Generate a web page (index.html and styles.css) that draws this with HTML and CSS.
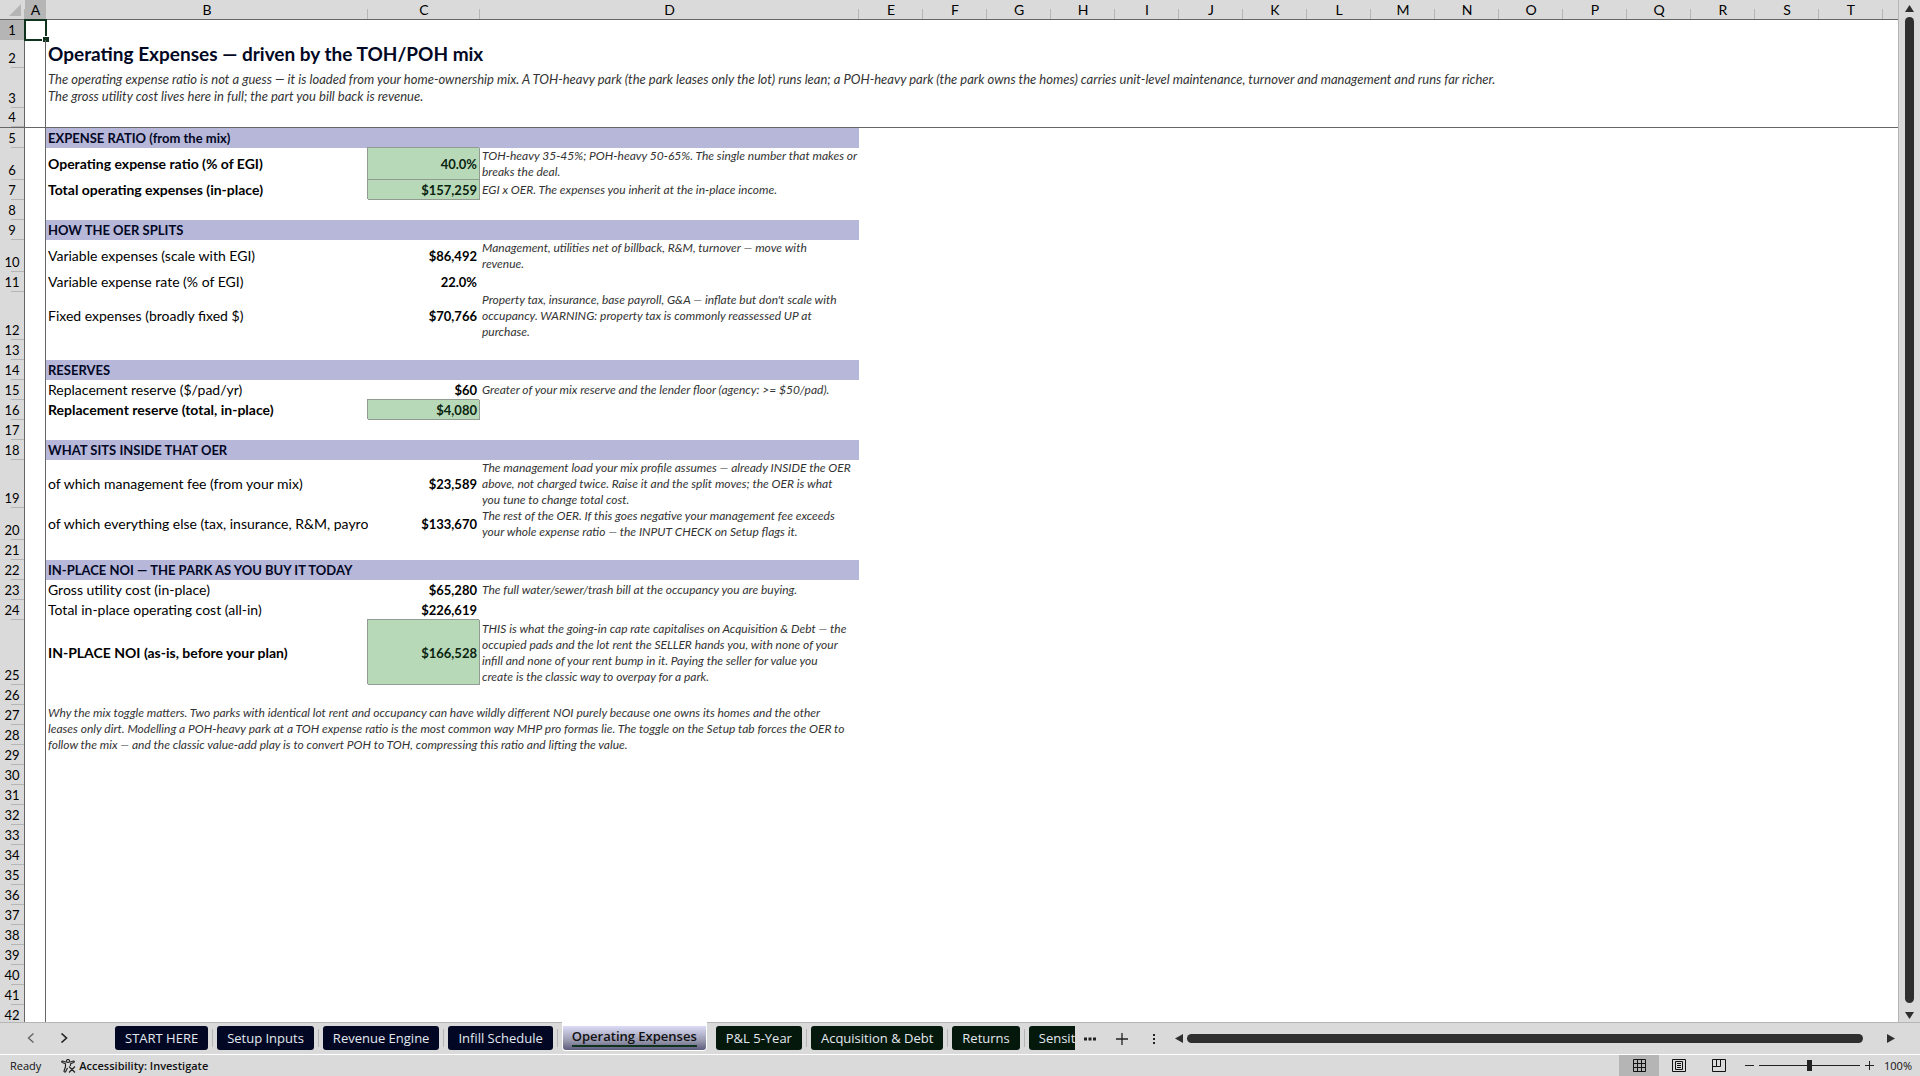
FILE: index.html
```html
<!DOCTYPE html>
<html lang="en">
<head>
  <meta charset="UTF-8">
  <meta name="viewport" content="width=device-width, initial-scale=1.0">
  <title>Operating Expenses</title>
  <link rel="stylesheet" href="styles.css">
</head>
<body>

  <!-- Worksheet -->
  <main class="workspace">
    <div class="sheet">
      <table class="grid">
        <colgroup>
          <col class="col-num"><col class="col-a"><col class="col-b"><col class="col-c"><col class="col-d">
          <col class="col-std" span="16">
          <col>
        </colgroup>
        <thead>
          <tr>
            <th class="corner"><svg width="12" height="12" viewBox="0 0 12 12"><path d="M12 0v12H0z" fill="#b5b5b5"/></svg></th>
            <th class="selected">A</th><th>B</th><th>C</th><th>D</th><th>E</th><th>F</th><th>G</th><th>H</th><th>I</th><th>J</th><th>K</th><th>L</th><th>M</th><th>N</th><th>O</th><th>P</th><th>Q</th><th>R</th><th>S</th><th>T</th><th class="last"></th>
          </tr>
        </thead>
        <tbody>
          <tr><th class="selected">1</th><td class="a"><span class="cursor"></span></td><td colspan="20"></td></tr>
          <tr class="h28"><th>2</th><td class="a"></td><td colspan="20"><h1 class="title">Operating Expenses — driven by the TOH/POH mix</h1></td></tr>
          <tr class="h40"><th>3</th><td class="a"></td><td colspan="20" class="intro">The operating expense ratio is not a guess — it is loaded from your home-ownership mix. A TOH-heavy park (the park leases only the lot) runs lean; a POH-heavy park (the park owns the homes) carries unit-level maintenance, turnover and management and runs far richer.<br>The gross utility cost lives here in full; the part you bill back is revenue.</td></tr>
          <tr class="freeze"><th>4</th><td class="a"></td><td colspan="20"></td></tr>

          <tr><th>5</th><td class="a"></td><td class="band" colspan="3">EXPENSE RATIO (from the mix)</td></tr>
          <tr class="h32 strong"><th>6</th><td class="a"></td><td>Operating expense ratio (% of EGI)</td><td class="num total">40.0%</td><td class="note">TOH-heavy 35-45%; POH-heavy 50-65%. The single number that makes or<br>breaks the deal.</td></tr>
          <tr class="strong"><th>7</th><td class="a"></td><td>Total operating expenses (in-place)</td><td class="num total">$157,259</td><td class="note">EGI x OER. The expenses you inherit at the in-place income.</td></tr>
          <tr><th>8</th><td class="a"></td></tr>

          <tr><th>9</th><td class="a"></td><td class="band" colspan="3">HOW THE OER SPLITS</td></tr>
          <tr class="h32"><th>10</th><td class="a"></td><td>Variable expenses (scale with EGI)</td><td class="num">$86,492</td><td class="note">Management, utilities net of billback, R&amp;M, turnover — move with<br>revenue.</td></tr>
          <tr><th>11</th><td class="a"></td><td>Variable expense rate (% of EGI)</td><td class="num">22.0%</td></tr>
          <tr class="h48"><th>12</th><td class="a"></td><td>Fixed expenses (broadly fixed $)</td><td class="num">$70,766</td><td class="note">Property tax, insurance, base payroll, G&amp;A — inflate but don't scale with<br>occupancy. WARNING: property tax is commonly reassessed UP at<br>purchase.</td></tr>
          <tr><th>13</th><td class="a"></td></tr>

          <tr><th>14</th><td class="a"></td><td class="band" colspan="3">RESERVES</td></tr>
          <tr><th>15</th><td class="a"></td><td>Replacement reserve ($/pad/yr)</td><td class="num">$60</td><td class="note">Greater of your mix reserve and the lender floor (agency: &gt;= $50/pad).</td></tr>
          <tr class="strong"><th>16</th><td class="a"></td><td>Replacement reserve (total, in-place)</td><td class="num total">$4,080</td></tr>
          <tr><th>17</th><td class="a"></td></tr>

          <tr><th>18</th><td class="a"></td><td class="band" colspan="3">WHAT SITS INSIDE THAT OER</td></tr>
          <tr class="h48"><th>19</th><td class="a"></td><td>of which management fee (from your mix)</td><td class="num">$23,589</td><td class="note">The management load your mix profile assumes — already INSIDE the OER<br>above, not charged twice. Raise it and the split moves; the OER is what<br>you tune to change total cost.</td></tr>
          <tr class="h32"><th>20</th><td class="a"></td><td>of which everything else (tax, insurance, R&amp;M, payroll)</td><td class="num">$133,670</td><td class="note">The rest of the OER. If this goes negative your management fee exceeds<br>your whole expense ratio — the INPUT CHECK on Setup flags it.</td></tr>
          <tr><th>21</th><td class="a"></td></tr>

          <tr><th>22</th><td class="a"></td><td class="band" colspan="3">IN-PLACE NOI — THE PARK AS YOU BUY IT TODAY</td></tr>
          <tr><th>23</th><td class="a"></td><td>Gross utility cost (in-place)</td><td class="num">$65,280</td><td class="note">The full water/sewer/trash bill at the occupancy you are buying.</td></tr>
          <tr><th>24</th><td class="a"></td><td>Total in-place operating cost (all-in)</td><td class="num">$226,619</td></tr>
          <tr class="h65 strong"><th>25</th><td class="a"></td><td>IN-PLACE NOI (as-is, before your plan)</td><td class="num total">$166,528</td><td class="note">THIS is what the going-in cap rate capitalises on Acquisition &amp; Debt — the<br>occupied pads and the lot rent the SELLER hands you, with none of your<br>infill and none of your rent bump in it. Paying the seller for value you<br>create is the classic way to overpay for a park.</td></tr>
          <tr><th>26</th><td class="a"></td></tr>

          <tr><th>27</th><td class="a"></td><td class="note remark" colspan="3" rowspan="3">Why the mix toggle matters. Two parks with identical lot rent and occupancy can have wildly different NOI purely because one owns its homes and the other<br>leases only dirt. Modelling a POH-heavy park at a TOH expense ratio is the most common way MHP pro formas lie. The toggle on the Setup tab forces the OER to<br>follow the mix — and the classic value-add play is to convert POH to TOH, compressing this ratio and lifting the value.</td></tr>
          <tr><th>28</th><td class="a"></td></tr>
          <tr><th>29</th><td class="a"></td></tr>
          <tr><th>30</th><td class="a"></td></tr>
          <tr><th>31</th><td class="a"></td></tr>
          <tr><th>32</th><td class="a"></td></tr>
          <tr><th>33</th><td class="a"></td></tr>
          <tr><th>34</th><td class="a"></td></tr>
          <tr><th>35</th><td class="a"></td></tr>
          <tr><th>36</th><td class="a"></td></tr>
          <tr><th>37</th><td class="a"></td></tr>
          <tr><th>38</th><td class="a"></td></tr>
          <tr><th>39</th><td class="a"></td></tr>
          <tr><th>40</th><td class="a"></td></tr>
          <tr><th>41</th><td class="a"></td></tr>
          <tr><th>42</th><td class="a"></td></tr>
        </tbody>
      </table>
    </div>

    <div class="vscroll">
      <svg width="9" height="7" viewBox="0 0 9 7"><path d="M4.500 0L9 7H0z" fill="#2f2f2f"/></svg>
      <div class="thumb"></div>
      <svg width="9" height="7" viewBox="0 0 9 7"><path d="M0 0h9L4.500 7z" fill="#2f2f2f"/></svg>
    </div>
  </main>

  <!-- Sheet tabs -->
  <div class="tabbar">
    <nav class="tabs">
      <button class="arrow" aria-label="Previous sheet"><svg width="8" height="10" viewBox="0 0 8 10"><path d="M6.500 .5L1.500 5l5 4.500" fill="none" stroke="#666" stroke-width="1.400"/></svg></button>
      <button class="arrow" aria-label="Next sheet"><svg width="8" height="10" viewBox="0 0 8 10"><path d="M1.500 .5l5 4.500-5 4.500" fill="none" stroke="#222" stroke-width="1.600"/></svg></button>
      <button class="tab navy first">START HERE</button>
      <button class="tab navy">Setup Inputs</button>
      <button class="tab navy">Revenue Engine</button>
      <button class="tab navy">Infill Schedule</button>
      <div class="active-wrap"><button class="tab-active"><span>Operating Expenses</span></button></div>
      <button class="tab green">P&amp;L 5-Year</button>
      <button class="tab green">Acquisition &amp; Debt</button>
      <button class="tab green">Returns</button>
      <button class="tab green">Sensitivity</button>
    </nav>
    <div class="tab-tools">
      <button aria-label="More sheets"><svg width="12" height="4" viewBox="0 0 12 4"><path d="M0 .5h3v3H0zM4.500 .5h3v3h-3zM9 .5h3v3H9z" fill="#222"/></svg></button>
      <button aria-label="New sheet"><svg width="12" height="12" viewBox="0 0 12 12"><path d="M6 0v12M0 6h12" stroke="#222" stroke-width="1.300"/></svg></button>
      <button aria-label="Resize tab bar"><svg width="12" height="12" viewBox="0 0 12 12"><path d="M5 1h2v2H5zM5 5h2v2H5zM5 9h2v2H5z" fill="#222"/></svg></button>
    </div>
    <div class="hscroll">
      <svg width="8" height="9" viewBox="0 0 8 9"><path d="M8 0v9L0 4.500z" fill="#2f2f2f"/></svg>
      <div class="thumb"></div>
      <svg width="8" height="9" viewBox="0 0 8 9"><path d="M0 0v9l8-4.500z" fill="#2f2f2f"/></svg>
    </div>
  </div>

  <!-- Status bar -->
  <footer class="statusbar">
    <span>Ready</span>
    <button class="access">
      <svg width="15" height="14" viewBox="0 0 15 14" fill="none" stroke="#222" stroke-width="1.200"><circle cx="7" cy="2" r="1.500"/><path d="M5.500 3.200L1.500 2C.6 1.900.5 3.100 1.300 3.500L4.500 4.800v3L3 12c0 1.200 1.300 1.300 1.700.5L6.500 9M8.500 3.200l4-1.200c.9-.1 1 1.100.2 1.500L9.500 4.800V7M8 7.500l6 6M14 7.500l-6 6"/></svg>
      Accessibility: Investigate
    </button>
    <div class="views">
      <button class="view on" aria-label="Normal"><svg width="13" height="13" viewBox="0 0 13 13"><path d="M.5.5h12v12H.5zM4.500 0v13M8.500 0v13M0 4.500h13M0 8.500h13" fill="none" stroke="#111"/></svg></button>
      <button class="view" aria-label="Page layout"><svg width="14" height="13" viewBox="0 0 14 13"><path d="M.5.5h13v12H.5zM3.500 2.500h7v8h-7zM5 4.500h4M5 6.500h4M5 8.500h4" fill="none" stroke="#111"/></svg></button>
      <button class="view" aria-label="Page break preview"><svg width="14" height="13" viewBox="0 0 14 13"><path d="M.5.5h13v12H.5zM.5 7.500h8v-7M4.500.5v7" fill="none" stroke="#111"/></svg></button>
    </div>
    <div class="zoom">
      <button aria-label="Zoom out"><svg width="9" height="9" viewBox="0 0 9 9"><path d="M0 4.500h9" stroke="#222"/></svg></button>
      <input type="range" min="0" max="200" value="100" aria-label="Zoom">
      <button aria-label="Zoom in"><svg width="9" height="9" viewBox="0 0 9 9"><path d="M0 4.500h9M4.500 0v9" stroke="#222"/></svg></button>
      <span class="percent">100%</span>
    </div>
  </footer>

</body>
</html>
```
FILE: styles.css
```css
* {
  box-sizing: border-box;
}

body {
  margin: 0;
  height: 100vh;
  display: flex;
  flex-direction: column;
  overflow: hidden;
  background-color: #dadada;
  color: #000;
  font-family: Lato, "Liberation Sans", sans-serif;
  font-size: 14px;
}

button {
  border: 0;
  padding: 0;
  background: none;
  font: inherit;
  color: inherit;
}

svg {
  display: block;
}

/* Worksheet */
.workspace {
  flex: 1;
  min-height: 0;
  display: flex;
}

.sheet {
  flex: 1;
  min-width: 0;
  overflow: hidden;
  background-color: #fff;
}

.grid {
  width: 100%;
  table-layout: fixed;
  border-collapse: separate;
  border-spacing: 0;
}

.col-num { width: 25px; }
.col-a { width: 21px; }
.col-b { width: 322px; }
.col-c { width: 112px; }
.col-d { width: 379px; }
.col-std { width: 64px; }

.grid tr {
  height: 20px;
}

.grid tr.h28 { height: 28px; }
.grid tr.h32 { height: 32px; }
.grid tr.h40 { height: 40px; }
.grid tr.h48 { height: 48px; }
.grid tr.h65 { height: 65px; }

.grid th {
  padding: 0;
  font-weight: normal;
  line-height: 16px;
  background-color: #dadada;
}

/* Column letters */
thead th {
  border-bottom: 1px solid #666;
  background-image: linear-gradient(#b5b5b5, #b5b5b5);
  background-repeat: no-repeat;
  background-size: 1px 10px;
  background-position: right bottom;
}

thead th.corner svg {
  margin-left: 9px;
}

thead th.last {
  background-image: none;
}

/* Row numbers */
.grid tbody th {
  padding-bottom: 2px;
  font-size: 13px;
  vertical-align: bottom;
  border-right: 1px solid #666;
  background-image: linear-gradient(#b5b5b5, #b5b5b5);
  background-repeat: no-repeat;
  background-size: 13px 1px;
  background-position: right bottom;
}

.grid th.selected {
  background-color: #b5b5b5;
}

.grid td {
  padding: 0 1px 0 2px;
  line-height: 16px;
  vertical-align: middle;
  white-space: nowrap;
  overflow: hidden;
}

.grid td.a {
  position: relative;
  padding: 0;
  overflow: visible;
  border-right: 1px solid #666;
}

/* Frozen panes line under row 4 */
.freeze th,
.freeze td {
  border-bottom: 1px solid #666;
}

/* Selected cell outline with fill handle */
.cursor {
  position: absolute;
  top: -1px;
  left: -1px;
  width: 23px;
  height: 22px;
  border: 2px solid #0f331c;
}

.cursor::after {
  content: '';
  position: absolute;
  right: -4px;
  bottom: -3px;
  width: 6px;
  height: 5px;
  border: 1px solid #fff;
  border-right: 0;
  border-bottom: 0;
  background-color: #0f331c;
}

.title {
  margin: 0;
  font-size: 19px;
  line-height: 24px;
  font-weight: bold;
  color: #020824;
}

.grid td.intro {
  font-size: 13px;
  line-height: 17px;
  font-style: italic;
  color: #333;
}

.grid td.band {
  background-color: #b7b7da;
  font-weight: bold;
  font-size: 13px;
  color: #020824;
}

.strong td {
  font-weight: bold;
}

.grid td.num {
  padding-right: 3px;
  text-align: right;
  font-size: 13px;
  font-weight: bold;
}

.grid td.total {
  background-color: #b8d9b8;
  color: #0a2410;
  box-shadow: -1px -1px 0 #919b91, inset -1px -1px 0 #919b91;
}

.grid td.note {
  font-size: 12px;
  font-style: italic;
  font-weight: normal;
  color: #333;
}

.grid td.remark {
  vertical-align: top;
}

/* Scrollbars */
.vscroll {
  width: 22px;
  display: flex;
  flex-direction: column;
  align-items: center;
  gap: 5px;
  padding: 5px 0 3px;
  border-left: 1px solid #b5b5b5;
}

.thumb {
  flex: 1;
  border-radius: 5px;
  background-color: #2f2f2f;
}

.vscroll .thumb {
  width: 9px;
  margin-bottom: 4px;
}

.hscroll {
  flex: 1;
  display: flex;
  align-items: center;
  gap: 4px;
  padding-right: 25px;
}

.hscroll .thumb {
  height: 9px;
  margin-right: 20px;
}

/* Sheet tabs */
.tabbar {
  height: 32px;
  display: flex;
  border-top: 1px solid #b5b5b5;
}

.tabs {
  width: 56%;
  display: flex;
  align-items: center;
  overflow: hidden;
  margin-top: -1px;
  padding-left: 27px;
}

.arrow {
  width: 8px;
  margin-right: 25px;
}

.tab {
  position: relative;
  flex: none;
  height: 24px;
  margin-right: 9px;
  padding: 0 10px;
  border-radius: 3px;
  font-family: "Open Sans", "Noto Sans", sans-serif;
  font-size: 13px;
  line-height: 24px;
  color: #e4e8f0;
}

/* Divider between neighbouring tabs */
.tab::after {
  content: '';
  position: absolute;
  top: 3px;
  right: -5px;
  width: 1px;
  height: 18px;
  background-color: #b5b5b5;
}

.navy {
  background-color: #020824;
}

.green {
  background-color: #04180b;
}

.first {
  margin-left: 22px;
}

.active-wrap {
  flex: none;
  align-self: flex-start;
  height: 29px;
  padding: 4px 1px 1px;
  margin-right: 9px;
  background-color: #fff;
  border-radius: 0 0 4px 4px;
}

.tab-active {
  height: 24px;
  padding: 0 9px;
  border-radius: 0 0 3px 3px;
  background-image: linear-gradient(#dcdcf8, #9a9ab0 60%, #5c5c7c);
  font-family: "Open Sans", "Noto Sans", sans-serif;
  font-size: 13px;
  font-weight: 600;
  color: #111;
}

.tab-active span {
  display: block;
  height: 18px;
  line-height: 14px;
  border-bottom: 2px solid #0f331c;
}

.tab-tools {
  display: flex;
  align-items: center;
  gap: 20px;
  padding: 0 15px 0 9px;
}

/* Status bar */
.statusbar {
  height: 22px;
  display: flex;
  align-items: center;
  border-top: 1px solid #fff;
  padding-left: 10px;
  font-family: "Open Sans", "Noto Sans", sans-serif;
  font-size: 11px;
  color: #111;
}

.access {
  display: flex;
  align-items: center;
  gap: 3px;
  margin-left: 20px;
  font-weight: 600;
}

.views {
  display: flex;
  align-self: stretch;
  margin-left: auto;
}

.view {
  width: 40px;
  display: flex;
  align-items: center;
  justify-content: center;
}

.view.on {
  background-color: #b5b5b5;
}

.zoom {
  display: flex;
  align-items: center;
  gap: 5px;
  padding: 0 8px 0 6px;
}

.zoom input {
  appearance: none;
  width: 101px;
  height: 12px;
  margin: 0;
  background: linear-gradient(#222, #222) no-repeat center / 100% 1px;
}

.zoom input::-webkit-slider-thumb {
  appearance: none;
  width: 5px;
  height: 11px;
  background-color: #222;
}

.percent {
  margin-left: 5px;
}
```
